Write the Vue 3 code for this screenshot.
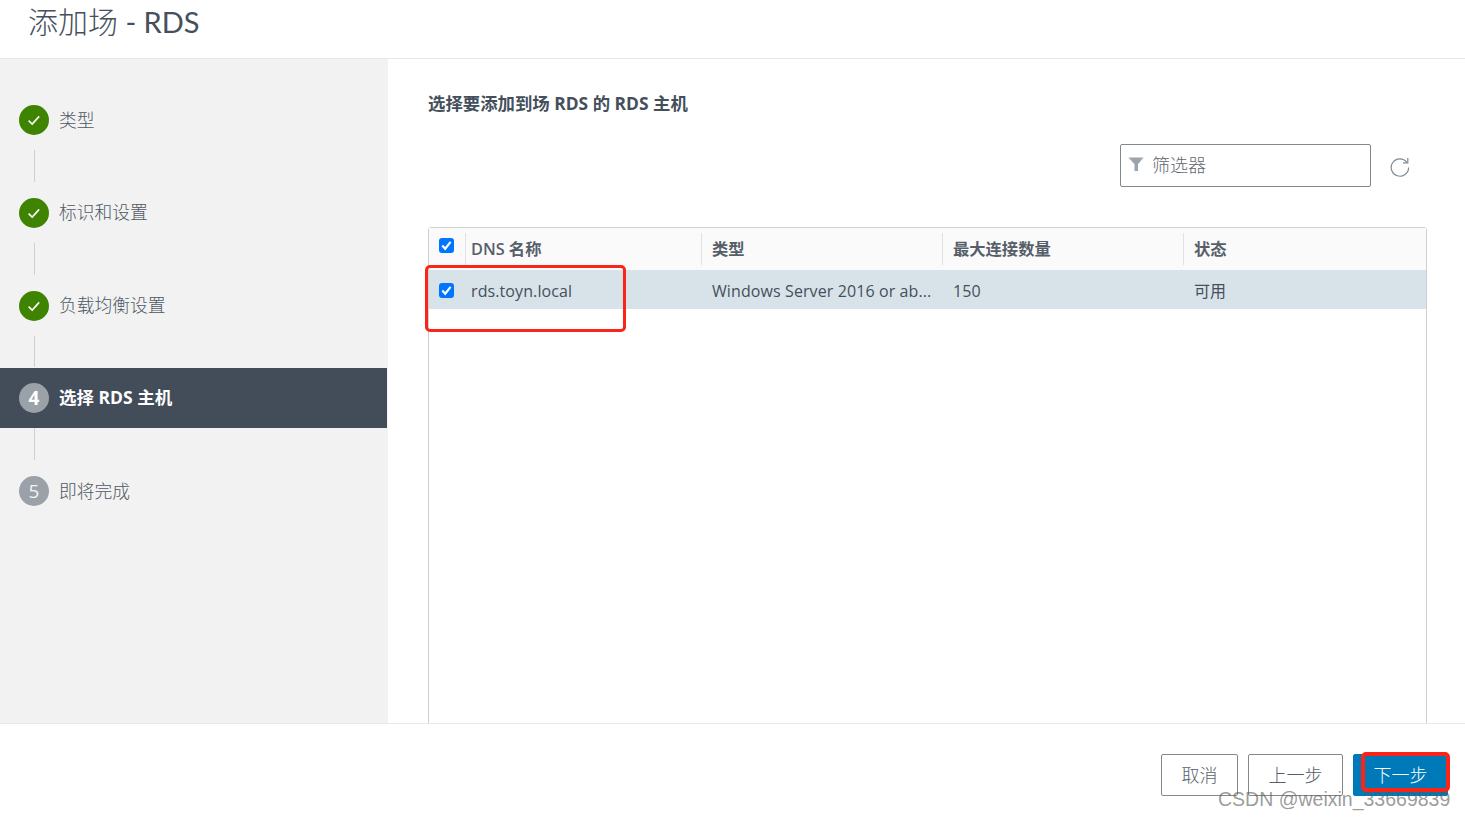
<script setup>
const steps = [
  { label: '类型', state: 'done' },
  { label: '标识和设置', state: 'done' },
  { label: '负载均衡设置', state: 'done' },
  { label: '选择 RDS 主机', state: 'active', num: 4 },
  { label: '即将完成', state: 'todo', num: 5 }
]
const columns = ['类型', '最大连接数量', '状态']
</script>

<template>
  <div class="page">
    <header class="head"><h1>添加场<span class="latin"> - RDS</span></h1></header>
    <div class="main">
      <nav class="side">
        <template v-for="(s, i) in steps" :key="s.label">
          <div class="step" :class="s.state">
            <span class="badge">
              <svg v-if="s.state === 'done'" width="16" height="16" viewBox="0 0 16 16"><path d="M2.600 8.600 6.200 12 13.200 4.400" fill="none" stroke="#fff" stroke-width="1.600"/></svg>
              <template v-else>{{ s.num }}</template>
            </span>
            <span class="label">{{ s.label }}</span>
          </div>
          <div v-if="i < steps.length - 1" class="link"><i></i></div>
        </template>
      </nav>
      <section class="content">
        <h2>选择要添加到场 RDS 的 RDS 主机</h2>
        <div class="tools">
          <div class="filter">
            <svg width="16" height="16" viewBox="0 0 16 16"><path d="M0.500 1.500H15.500L10 8.200V15H6.500V8.200Z" fill="#9aa5ae"/></svg>
            <span>筛选器</span>
          </div>
          <svg class="refresh" width="22" height="22" viewBox="0 0 22 22"><path d="M17.800 7.200A8.700 8.700 0 1 0 19.600 12.500" fill="none" stroke="#7f8a93" stroke-width="1.200"/><path d="M18.800 3V7.800H14" fill="none" stroke="#7f8a93" stroke-width="1.200"/></svg>
        </div>
        <div class="table">
          <div class="row hrow">
            <div class="cb"><span class="check"><svg width="15" height="15" viewBox="0 0 15 15"><path d="M3.300 7.600 6.200 10.800 11.600 3.900" fill="none" stroke="#fff" stroke-width="2.200"/></svg></span></div>
            <div class="cell first"><span>DNS 名称</span></div>
            <div v-for="c in columns" :key="c" class="cell"><span>{{ c }}</span></div>
          </div>
          <div class="row drow">
            <div class="cb"><span class="check"><svg width="15" height="15" viewBox="0 0 15 15"><path d="M3.300 7.600 6.200 10.800 11.600 3.900" fill="none" stroke="#fff" stroke-width="2.200"/></svg></span></div>
            <div class="cell first">rds.toyn.local</div>
            <div class="cell">Windows Server 2016 or ab...</div>
            <div class="cell">150</div>
            <div class="cell status">可用</div>
          </div>
        </div>
      </section>
    </div>
    <footer class="foot">
      <button class="btn cancel">取消</button>
      <button class="btn prev">上一步</button>
      <button class="btn next">下一步</button>
    </footer>
    <div class="mark mark-row"></div>
    <div class="mark mark-next"></div>
    <div class="watermark">CSDN @weixin_33669839</div>
  </div>
</template>

<style>
html, body { margin: 0; background: #fff; overflow: hidden; }
</style>

<style scoped>
.page {
  position: relative;
  width: 1465px;
  height: 818px;
  display: flex;
  flex-direction: column;
  overflow: hidden;
  font-family: "Open Sans", "Noto Sans CJK SC", sans-serif;
  color: #454f5b;
}
.head {
  height: 58px;
  flex: none;
  border-bottom: 1px solid #e8e8e8;
  padding-left: 28px;
}
.head h1 {
  margin: 0;
  padding-top: 2px;
  font: 300 30px/38px Lato, "Noto Sans CJK SC", sans-serif;
  color: #46505c;
}
.latin { font-weight: 400; font-size: 29px; }
.main { flex: 1; display: flex; min-height: 0; }
.side {
  width: 388px;
  flex: none;
  box-sizing: border-box;
  padding: 31px 1px 0 0;
  background: #f2f2f2;
}
.step {
  height: 60px;
  display: flex;
  align-items: center;
  padding-left: 19px;
  font-size: 17.75px;
  font-weight: 300;
  color: #4e5863;
}
.label { padding-bottom: 3px; }
.badge {
  width: 30px;
  height: 30px;
  flex: none;
  border-radius: 50%;
  display: flex;
  align-items: center;
  justify-content: center;
  margin-right: 10px;
  background: #9ba1a8;
  color: #f4f4f4;
  font-size: 19px;
  font-weight: 400;
}
.done .badge { background: #3f8400; }
.active { background: #434d5a; color: #fff; font-weight: 700; font-size: 17.5px; }
.active .badge { font-weight: 700; color: #fff; }
.link { height: 32.75px; padding-left: 34px; padding-bottom: 1px; box-sizing: border-box; }
.link i { display: block; width: 1px; height: 100%; background: #cfcfcf; }
.content { flex: 1; padding: 33px 38px 0 40px; min-width: 0; overflow: hidden; }
h2 {
  margin: 0;
  font-size: 17.4px;
  line-height: 22px;
  font-weight: 700;
  color: #454f5b;
}
.tools { display: flex; justify-content: flex-end; align-items: center; margin-top: 30px; height: 43px; padding-right: 16px; }
.filter {
  width: 251px;
  height: 43px;
  box-sizing: border-box;
  border: 1px solid #85888b;
  border-radius: 2px;
  display: flex;
  align-items: center;
  gap: 8px;
  padding: 0 0 3px 7px;
  font-size: 18px;
  font-weight: 300;
  color: #5f6770;
}
.refresh { margin-left: 18px; margin-top: 1px; }
.table {
  margin-top: 40px;
  width: 999px;
  height: 520px;
  box-sizing: border-box;
  border: 1px solid #cfcfcf;
  border-radius: 3px 3px 0 0;
}
.row { display: grid; grid-template-columns: 36px 236px 241px 241px 1fr; align-items: center; }
.hrow { height: 42px; background: #fafafa; font-weight: 600; font-size: 16.3px; color: #565f69; }
.hrow .cell span { margin-top: -2px; }
.drow { height: 39px; background: #d8e3e9; font-size: 16px; letter-spacing: 0.1px; color: #454f5b; }
.drow .cell { padding-top: 2px; }
.drow .cell.status { padding-top: 0; }
.cb { display: flex; justify-content: center; padding-right: 2px; }
.hrow .cb { padding-bottom: 7px; }
.drow .cb { padding-top: 2px; }
.check { width: 15px; height: 15px; border-radius: 3px; background: #0075ff; display: block; }
.check svg { display: block; }
.cell { padding-left: 11px; height: 100%; display: flex; align-items: center; box-sizing: border-box; min-width: 0; white-space: nowrap; }
.hrow .cell { position: relative; }
.hrow .cell::before {
  content: "";
  position: absolute;
  left: 0;
  top: 5px;
  bottom: 5px;
  width: 1px;
  background: #e2e2e2;
}
.cell.first { padding-left: 6px; }
.foot {
  height: 95px;
  flex: none;
  background: #fff;
  border-top: 1px solid #e8e8e8;
  box-sizing: border-box;
  display: flex;
  justify-content: flex-end;
  align-items: flex-start;
  padding: 30px 17px 0 0;
  gap: 10px;
}
.btn {
  height: 42px;
  box-sizing: border-box;
  border: 1px solid #85888b;
  border-radius: 2px;
  background: #fff;
  color: #566069;
  font: 300 18px/1 "Open Sans", "Noto Sans CJK SC", sans-serif;
  padding: 0;
}
.cancel { width: 77px; }
.prev { width: 95px; }
.next { width: 95px; background: #0079b8; border-color: #0079b8; color: #fff; }
.mark { position: absolute; border: 3px solid #fb2418; border-radius: 5px; box-sizing: border-box; }
.mark-row { left: 425px; top: 265px; width: 201px; height: 67px; border-width: 3.500px; }
.mark-next { left: 1361px; top: 752px; width: 89px; height: 40px; border-width: 4px; }
.watermark {
  position: absolute;
  left: 1218px;
  top: 787px;
  font: 400 19.500px/24px "Liberation Sans", sans-serif;
  color: rgba(90, 90, 90, 0.62);
  white-space: nowrap;
}
</style>
